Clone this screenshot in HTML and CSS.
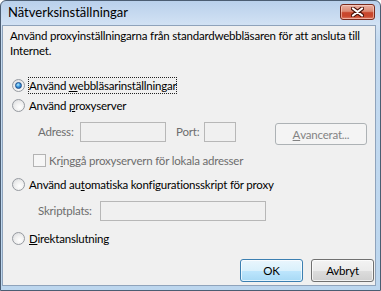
FILE: index.html
```html
<!DOCTYPE html>
<html lang="sv">
<head>
<meta charset="utf-8">
<title>Nätverksinställningar</title>
<link rel="stylesheet" href="styles.css">
</head>
<body>
<div class="window">
  <div class="titlebar">
    <span class="title">Nätverksinställningar</span>
    <span class="close">
      <svg width="13" height="10" viewBox="0 0 13 10">
        <path d="M2 1.5 L11 8.5 M11 1.5 L2 8.5" stroke="#4a1208" stroke-width="4.2" stroke-linecap="round"/>
        <path d="M2 1.5 L11 8.5 M11 1.5 L2 8.5" stroke="#ffffff" stroke-width="2.2" stroke-linecap="round"/>
      </svg>
    </span>
  </div>
  <div class="client">
    <p class="intro">Använd proxyinställningarna från standardwebbläsaren för att ansluta till Internet.</p>

    <div class="row r1"><span class="radio checked"></span><span class="label focus">Använd <u>w</u>ebbläsarinställningar</span></div>
    <div class="row r2"><span class="radio"></span><span class="label">Använd <u>p</u>roxyserver</span></div>

    <div class="fields addr">
      <span class="flabel w-adress">Adress:</span>
      <span class="input w-addr"></span>
      <span class="flabel w-port">Port:</span>
      <span class="input w-portin"></span>
      <span class="button disabled"><u>A</u>vancerat...</span>
    </div>

    <div class="row chk"><span class="checkbox"></span><span class="clabel">Kr<u>i</u>nggå proxyservern för lokala adresser</span></div>

    <div class="row r3"><span class="radio"></span><span class="label">Använd au<u>t</u>omatiska konfigurationsskript för proxy</span></div>

    <div class="fields script">
      <span class="flabel w-skript">Skriptplats:</span>
      <span class="input w-script"></span>
    </div>

    <div class="row r4"><span class="radio"></span><span class="label"><u>D</u>irektanslutning</span></div>

    <div class="actions">
      <span class="button default">OK</span>
      <span class="button">Avbryt</span>
    </div>
  </div>
</div>
</body>
</html>
```

FILE: styles.css
```css
html, body {
  margin: 0;
  padding: 0;
}
body {
  width: 381px;
  height: 291px;
  overflow: hidden;
  font-family: Lato, "Noto Sans", "Liberation Sans", sans-serif;
  font-size: 11.5px;
  letter-spacing: -0.2px;
  color: #000;
}
.window {
  width: 381px;
  height: 291px;
  box-sizing: border-box;
  display: flex;
  flex-direction: column;
  border: 1px solid #4b5d72;
  border-radius: 6px 6px 0 0;
  background: linear-gradient(#b9d0eb 0, #d2e2f4 24px, #c4daf0 40px, #bcd6ee 100%);
}
.titlebar {
  height: 24px;
  flex: none;
  display: flex;
  align-items: center;
  justify-content: space-between;
}
.title {
  padding-left: 7px;
  padding-bottom: 2px;
  font-size: 13px;
  letter-spacing: 0;
}
.close {
  align-self: flex-start;
  margin-top: 3px;
  margin-right: 5px;
  width: 35px;
  height: 16px;
  box-sizing: border-box;
  border: 1px solid #7a2a1c;
  border-radius: 3px;
  background: linear-gradient(#eab0a2 0, #dc8a74 45%, #c9472d 55%, #c9472d 80%, #e0806a 100%);
  display: flex;
  align-items: center;
  justify-content: center;
  box-shadow: inset 0 0 0 1px rgba(255,220,210,0.55);
}
.close svg {
  display: block;
}
.client {
  flex: 1;
  margin: 0 4px 4px 1px;
  background: #f0f0f0;
  border: 1px solid #8fa3bb;
  padding: 2px 8px 0 7px;
  display: flex;
  flex-direction: column;
}
.intro {
  margin: 0;
  line-height: 15px;
  height: 30px;
}
.row {
  display: flex;
  align-items: center;
  height: 18px;
}
.r1 { margin-top: 18px; margin-left: 2px; }
.r2 { margin-top: 2px; margin-left: 2px; }
.r3 { margin-top: 6px; margin-left: 2px; }
.r4 { margin-top: 8px; margin-left: 2px; }
.radio {
  width: 13px;
  height: 13px;
  box-sizing: border-box;
  border-radius: 50%;
  border: 1px solid #969aa0;
  background: radial-gradient(circle at 60% 65%, #ffffff 0, #f0f0f0 45%, #d6d8db 100%);
  display: flex;
  align-items: center;
  justify-content: center;
  flex: none;
}
.radio.checked::after {
  content: "";
  width: 7px;
  height: 7px;
  border-radius: 50%;
  box-sizing: border-box;
  border: 1px solid #1d4d8a;
  background: radial-gradient(circle at 40% 35%, #b8ecff 0, #3d9be0 45%, #1a4f9c 100%);
}
.label {
  margin-left: 3px;
  padding: 1px 0 1px 0;
  border: 1px solid transparent;
  line-height: 13px;
  white-space: nowrap;
}
.label.focus {
  border: 1px dotted #222;
}
.fields {
  display: flex;
  align-items: flex-start;
  color: #6d6d6d;
}
.addr { margin-top: 8px; height: 23px; }
.script { margin-top: 8px; height: 20px; }
.flabel {
  line-height: 20px;
  white-space: nowrap;
}
.w-adress { margin-left: 28px; width: 42px; }
.w-port { margin-left: 10px; width: 28px; }
.w-skript { margin-left: 28px; width: 62px; }
.input {
  height: 20px;
  box-sizing: border-box;
  border: 1px solid #b7b7b7;
  background: #f0f0f0;
}
.w-addr { width: 86px; }
.w-portin { width: 32px; }
.w-script { width: 166px; }
.chk { margin-top: 6px; margin-left: 23px; color: #6d6d6d; }
.checkbox {
  width: 13px;
  height: 13px;
  box-sizing: border-box;
  border: 1px solid #b3b3b3;
  background: #f6f6f6;
  flex: none;
}
.clabel {
  margin-left: 3px;
  white-space: nowrap;
}
.button {
  height: 23px;
  box-sizing: border-box;
  border: 1px solid #707070;
  border-radius: 3px;
  background: linear-gradient(#f3f3f3 0, #ebebeb 50%, #dddddd 51%, #cfcfcf 100%);
  display: flex;
  align-items: center;
  justify-content: center;
  box-shadow: inset 0 0 0 1px rgba(255,255,255,0.7);
  color: #000;
}
.fields .button {
  margin-left: 39px;
  margin-top: 1px;
  width: 92px;
  height: 22px;
}
.button.disabled {
  border-color: #adb2b5;
  background: #f4f4f4;
  color: #838383;
  box-shadow: none;
}
.button.default {
  border-color: #3c7fb1;
  background: linear-gradient(#eaf6fd 0, #d9f0fc 50%, #bee6fd 51%, #a7d9f5 100%);
}
.actions {
  display: flex;
  justify-content: flex-end;
  gap: 8px;
  margin-top: 12px;
  margin-right: -7px;
}
.actions .button {
  width: 63px;
}
```
